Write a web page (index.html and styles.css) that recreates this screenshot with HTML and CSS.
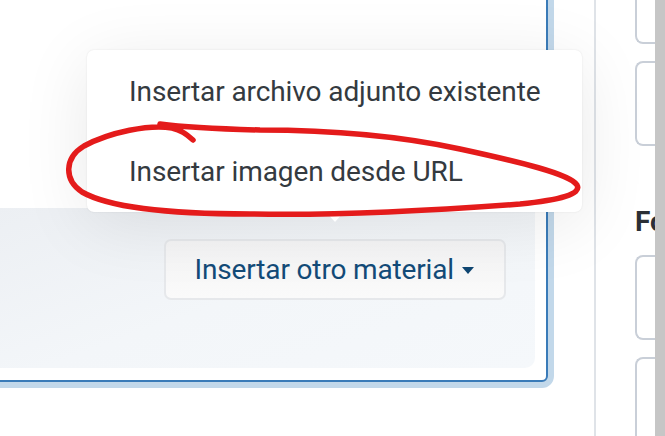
FILE: index.html
```html
<!DOCTYPE html>
<html lang="es">
<head>
  <meta charset="UTF-8" />
  <meta name="viewport" content="width=device-width, initial-scale=1.0"/>
  <title>Insertar otro material</title>
  <link rel="stylesheet" href="styles.css">
</head>
<body>
  <div class="page">
    <div class="main">
      <div class="editor-box">
        <div class="editor-area"></div>
        <div class="editor-footer">
          <button class="insert-btn" type="button">
            <span>Insertar otro material</span>
            <span class="caret"></span>
          </button>
        </div>
      </div>
    </div>

    <div class="divider"></div>

    <aside class="side">
      <div class="card card-top"></div>
      <div class="card card-mid"></div>
      <h3 class="side-title">Fo</h3>
      <div class="card card-mid"></div>
      <div class="card card-low"></div>
    </aside>

    <div class="scrollbar"></div>

    <ul class="dropdown">
      <li>Insertar archivo adjunto existente</li>
      <li>Insertar imagen desde URL</li>
    </ul>

    <svg class="scribble" width="665" height="436" viewBox="0 0 665 436">
      <path d="M193 140 C186 134, 181 130, 172 128 C150 124, 110 132, 84 146 C64 158, 64 180, 82 192 C110 208, 170 214, 250 214 C340 216, 440 210, 520 204 C560 200, 582 194, 577 185 C570 174, 520 162, 460 149 C400 136, 330 130, 260 130 C220 129, 190 128, 160 124"
            fill="none" stroke="#e41b1b" stroke-width="5.5" stroke-linecap="round" stroke-linejoin="round"/>
    </svg>
  </div>
</body>
</html>
```

FILE: styles.css
```css
* { margin: 0; padding: 0; box-sizing: border-box; }

body {
  width: 665px;
  height: 436px;
  overflow: hidden;
  background: #fff;
  font-family: 'Roboto', 'Noto Sans', sans-serif;
}

.page {
  position: relative;
  display: flex;
  height: 436px;
}

.main {
  flex: 0 0 594px;
  padding-right: 46px;
}

.editor-box {
  margin: -20px 0 0 -10px;
  background: #fff;
  border: 2px solid #3a7bb8;
  border-radius: 6px;
  box-shadow: 0 0 0 6px #c2d8ea;
  padding: 0 11px 12px 0;
}

.editor-area {
  height: 226px;
}

.editor-footer {
  height: 160px;
  display: flex;
  justify-content: flex-end;
  align-items: flex-start;
  padding: 31px 29px 0 0;
  background: linear-gradient(160deg, #eceff3 0%, #f3f6f9 50%, #f5f8fb 100%);
  border-radius: 0 0 10px 0;
}

.insert-btn {
  height: 61px;
  display: flex;
  align-items: center;
  gap: 8px;
  padding: 0 30px 0 29px;
  background: linear-gradient(#f4f4f5, #fafafa);
  border: 2px solid #e6e8eb;
  border-radius: 7px;
  color: #134b78;
  font-family: inherit;
  font-size: 28px;
  letter-spacing: -0.15px;
}

.caret {
  width: 0;
  height: 0;
  border-left: 6px solid transparent;
  border-right: 6px solid transparent;
  border-top: 7px solid #0f4672;
  margin-top: 2px;
}

.divider {
  flex: 0 0 2px;
  background: #dfe3e8;
}

.side {
  flex: 1;
  min-width: 0;
  padding-left: 39px;
  display: flex;
  flex-direction: column;
  overflow: hidden;
}

.card {
  flex-shrink: 0;
  margin-bottom: 17px;
  border: 2px solid #c9cfd8;
  border-right: none;
  border-radius: 8px 0 0 8px;
  background: #fff;
}

.card-top {
  height: 62px;
  margin-top: -18px;
}

.card-mid {
  height: 85px;
}

.card-low {
  height: 90px;
}

.side-title {
  flex-shrink: 0;
  margin: 40px 0 14px;
  font-size: 28px;
  font-weight: 700;
  color: #2b2f36;
  line-height: 38px;
}

.scrollbar {
  flex: 0 0 10px;
  background: #c6c6c6;
}

.dropdown {
  position: absolute;
  left: 87px;
  top: 50px;
  width: 495px;
  height: 162px;
  padding: 1px 0;
  list-style: none;
  background: #fff;
  border-radius: 7px;
  box-shadow: 0 0 2px rgba(0, 0, 0, 0.1), 0 12px 70px rgba(0, 0, 0, 0.09);
}

.dropdown::after {
  content: "";
  position: absolute;
  left: 239px;
  bottom: -10px;
  border-left: 9px solid transparent;
  border-right: 9px solid transparent;
  border-top: 10px solid #fff;
}

.dropdown li {
  height: 80px;
  display: flex;
  align-items: center;
  padding-left: 42px;
  font-size: 28px;
  letter-spacing: -0.1px;
  color: #343a40;
}

.scribble {
  position: absolute;
  left: 0;
  top: 0;
  pointer-events: none;
}
```
